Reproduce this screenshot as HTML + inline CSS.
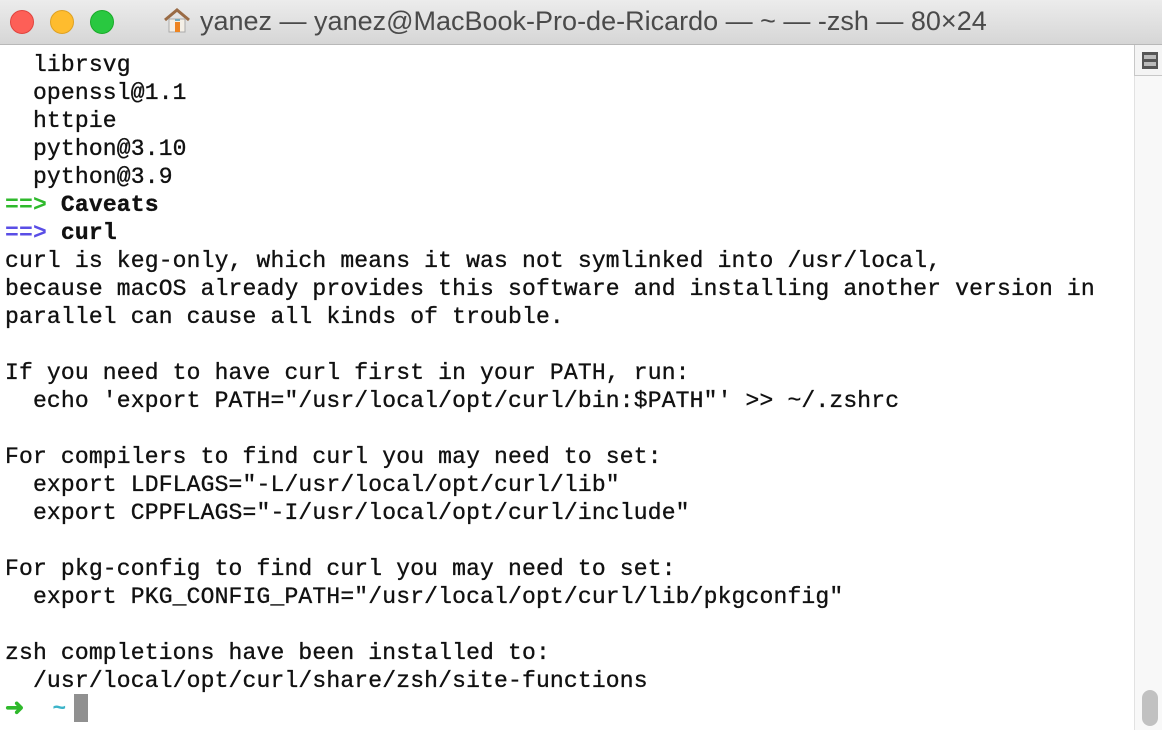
<!DOCTYPE html>
<html><head><meta charset="utf-8"><style>
html,body{margin:0;padding:0;width:1162px;height:730px;overflow:hidden;background:#fff}
.title{position:absolute;left:0;top:0;width:1162px;height:44px;background:linear-gradient(#ececec,#d6d6d6);border-bottom:1px solid #b8b8b8}
.dot{position:absolute;top:10px;width:22px;height:22px;border-radius:50%}
.ttl{position:absolute;left:163px;top:6px;white-space:nowrap;font:27px "Liberation Sans",sans-serif;color:#4a4a4a}
.term{position:absolute;left:5px;top:51px;font:23px/28px "Liberation Mono",monospace;letter-spacing:0.17px;color:#111;white-space:pre;-webkit-text-stroke:0.35px #111}
.g{color:#2fb92c;font-weight:bold;-webkit-text-stroke:0}.p{color:#5a4ee6;font-weight:bold;-webkit-text-stroke:0}b{font-weight:bold}
.sb{position:absolute;left:1134px;top:45px;width:28px;height:685px;background:#f8f8f8;border-left:1px solid #e2e2e2}
.sbtop{position:absolute;left:1134px;top:45px;width:28px;height:30px;background:#f4f4f4;border-left:1px solid #c8c8c8;border-bottom:1px solid #c8c8c8}
</style></head><body>
<div class="title">
<div class="dot" style="left:10px;background:#fd5f57;border:1px solid #e0443e"></div>
<div class="dot" style="left:50px;background:#febc2e;border:1px solid #dea123"></div>
<div class="dot" style="left:90px;background:#29c840;border:1px solid #1aab29"></div>
<div class="ttl"><svg width="28" height="26" viewBox="0 0 28 26" style="vertical-align:-3px;margin-right:9px"><path d="M2 13 L14 3 L26 13" fill="none" stroke="#9a6b45" stroke-width="3"/><rect x="6" y="12" width="16" height="13" fill="#f4efe6" stroke="#aaa" stroke-width="1"/><rect x="12" y="15" width="5" height="10" fill="#ee8420"/><rect x="12" y="12" width="5" height="2" fill="#7ab"/></svg>yanez — yanez@MacBook-Pro-de-Ricardo — ~ — -zsh — 80×24</div>
</div>
<div class="sb"></div>
<div class="sbtop"><div style="position:absolute;left:7px;top:7px;width:16px;height:17px;background:#555"></div><div style="position:absolute;left:9px;top:10px;width:12px;height:4px;background:#bbb"></div><div style="position:absolute;left:9px;top:17px;width:12px;height:4px;background:#bbb"></div></div>
<div style="position:absolute;left:1142px;top:690px;width:16px;height:36px;border-radius:8px;background:#c1c1c1"></div>
<div class="term">  librsvg
  openssl@1.1
  httpie
  python@3.10
  python@3.9
<span class="g">==&gt;</span> <b>Caveats</b>
<span class="p">==&gt;</span> <b>curl</b>
curl is keg-only, which means it was not symlinked into /usr/local,
because macOS already provides this software and installing another version in
parallel can cause all kinds of trouble.

If you need to have curl first in your PATH, run:
  echo 'export PATH="/usr/local/opt/curl/bin:$PATH"' &gt;&gt; ~/.zshrc

For compilers to find curl you may need to set:
  export LDFLAGS="-L/usr/local/opt/curl/lib"
  export CPPFLAGS="-I/usr/local/opt/curl/include"

For pkg-config to find curl you may need to set:
  export PKG_CONFIG_PATH="/usr/local/opt/curl/lib/pkgconfig"

zsh completions have been installed to:
  /usr/local/opt/curl/share/zsh/site-functions
<span style="color:#2fb92c;font-weight:bold;-webkit-text-stroke:0">➜</span>  <span style="color:#3cb4c9;font-weight:bold;-webkit-text-stroke:0">~</span> </div>
<div style="position:absolute;left:74px;top:694px;width:14px;height:28px;background:#909090"></div>
</body></html>
